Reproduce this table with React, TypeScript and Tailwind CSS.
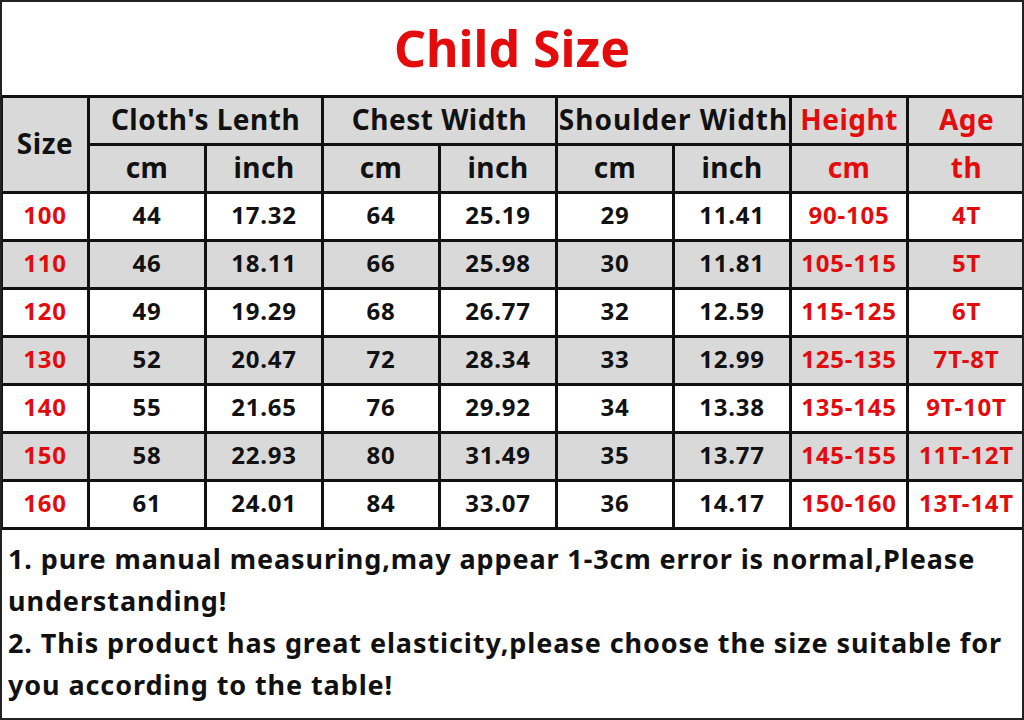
import React from "react";

const ROWS = [
  ["100", "44", "17.32", "64", "25.19", "29", "11.41", "90-105", "4T"],
  ["110", "46", "18.11", "66", "25.98", "30", "11.81", "105-115", "5T"],
  ["120", "49", "19.29", "68", "26.77", "32", "12.59", "115-125", "6T"],
  ["130", "52", "20.47", "72", "28.34", "33", "12.99", "125-135", "7T-8T"],
  ["140", "55", "21.65", "76", "29.92", "34", "13.38", "135-145", "9T-10T"],
  ["150", "58", "22.93", "80", "31.49", "35", "13.77", "145-155", "11T-12T"],
  ["160", "61", "24.01", "84", "33.07", "36", "14.17", "150-160", "13T-14T"],
];

const cell = "border-[3px] border-[#111] px-0 pt-0 pb-[3px] text-center align-middle whitespace-nowrap";

export default function App() {
  return (
    <div
      className="flex h-[720px] w-[1024px] flex-col overflow-hidden border-2 border-[#222] bg-white text-[#111]"
      style={{ fontFamily: '"Noto Sans", "Open Sans", sans-serif' }}
    >
      {/* Title */}
      <div className="flex h-[93px] shrink-0 items-center justify-center">
        <h1 className="-mt-[2px] text-[50px] font-bold leading-none text-[#e30b0b]">Child Size</h1>
      </div>

      {/* Size table */}
      <table className="w-[1024px] -ml-[2px] table-fixed border-collapse font-bold">
        <colgroup>
          <col className="w-[87px]" />
          <col className="w-[117px]" />
          <col className="w-[117px]" />
          <col className="w-[117px]" />
          <col className="w-[117px]" />
          <col className="w-[117px]" />
          <col className="w-[117px]" />
          <col className="w-[117px]" />
          <col className="w-[118px]" />
        </colgroup>
        <thead className="bg-[#d9d9d9] text-[28px] tracking-[0.5px]">
          <tr className="h-[48px]">
            <th rowSpan={2} className={cell}>Size</th>
            <th colSpan={2} className={cell}>Cloth's Lenth</th>
            <th colSpan={2} className={cell}>Chest Width</th>
            <th colSpan={2} className={`${cell} tracking-[1px]`}>Shoulder Width</th>
            <th className={`${cell} text-[#e30b0b]`}>Height</th>
            <th className={`${cell} text-[#e30b0b]`}>Age</th>
          </tr>
          <tr className="h-[48px]">
            <th className={cell}>cm</th>
            <th className={cell}>inch</th>
            <th className={cell}>cm</th>
            <th className={cell}>inch</th>
            <th className={cell}>cm</th>
            <th className={cell}>inch</th>
            <th className={`${cell} text-[#e30b0b]`}>cm</th>
            <th className={`${cell} text-[#e30b0b]`}>th</th>
          </tr>
        </thead>
        <tbody className="text-[24px] tracking-[0.8px]">
          {ROWS.map((r, i) => (
            <tr key={r[0]} className={`h-[48px] ${i % 2 === 1 ? "bg-[#d9d9d9]" : "bg-white"}`}>
              {r.map((v, j) => (
                <td
                  key={j}
                  className={`${cell} ${j === 0 || j >= 7 ? "text-[#e30b0b]" : ""}`}
                >
                  {v}
                </td>
              ))}
            </tr>
          ))}
        </tbody>
      </table>

      {/* Notes */}
      <div className="flex-1 px-[6px] pt-[8px] text-[27px] font-bold leading-[42px] tracking-[0.9px]">
        <p>1. pure manual measuring,may appear 1-3cm error is normal,Please understanding!</p>
        <p>2. This product has great elasticity,please choose the size suitable for you according to the table!</p>
      </div>
    </div>
  );
}
